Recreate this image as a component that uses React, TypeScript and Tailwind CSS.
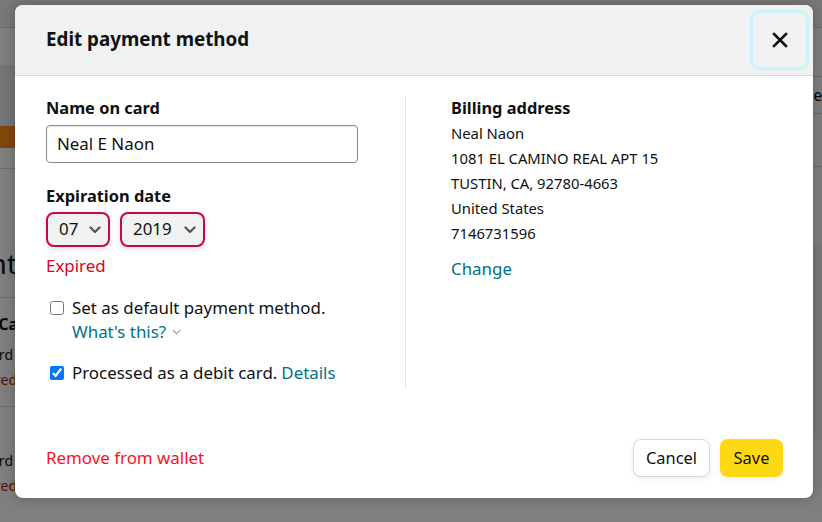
import React from "react";

function Chevron({ className }: { className?: string }) {
  return (
    <svg viewBox="0 0 12 8" className={className} fill="none">
      <path d="M1.5 1.5 L6 6 L10.5 1.5" stroke="currentColor" strokeWidth="2.2" strokeLinecap="round" strokeLinejoin="round" />
    </svg>
  );
}

function SelectBox({ value, width }: { value: string; width: string }) {
  return (
    <div
      className={`flex h-[35px] ${width} items-center justify-between rounded-[8px] border-2 border-[#c40c3c] bg-[#f0f2f2] pl-[11px] pr-[7px] shadow-[0_2px_5px_rgba(15,17,17,0.15)]`}
    >
      <span className="text-[16.9px] leading-none text-[#0f1111]">{value}</span>
      <Chevron className="h-[8px] w-[12px] text-[#555]" />
    </div>
  );
}

export default function App() {
  return (
    <div
      className="relative h-[522px] w-full overflow-hidden bg-white"
      style={{ fontFamily: '"Noto Sans", "Open Sans", Arial, sans-serif' }}
    >
      {/* underlying page */}
      <div className="flex h-full flex-col text-[#0f1111]">
        <div className="h-[28px] shrink-0 border-b border-[#d5d9d9] bg-[#f3f3f3]" />
        <div className="flex flex-1">
          <div className="flex w-[185px] shrink-0 flex-col">
            <div className="h-[37px]" />
            <div className="ml-[-70px] flex h-[83px] w-[110px] flex-col overflow-hidden rounded-[4px] bg-[#e9ecef]">
              <div className="flex flex-1 flex-col items-end justify-center pr-[92px]">
                <span className="text-[10px] font-bold italic text-[#23313f]">amazon</span>
                <span className="mt-[8px] text-[10px] font-bold italic text-[#1a1f71]">VISA</span>
              </div>
              <div className="h-[22px] bg-[#ff8f1c]" />
            </div>
            <div className="mt-[20px] border-b border-[#d5d9d9]" />
            <div className="mt-[80px] flex justify-end pr-[168px] text-[28px] leading-none whitespace-nowrap">Payment</div>
            <div className="mt-[20px] border-b border-[#d5d9d9]" />
            <div className="mt-[14px] flex justify-end pr-[150px] text-[16px] font-bold whitespace-nowrap">Card</div>
            <div className="mt-[8px] flex justify-end pr-[172px] text-[14px] whitespace-nowrap">Card</div>
            <div className="mt-[4px] flex justify-end pr-[168px] text-[14px] whitespace-nowrap text-[#b12704]">Expired</div>
            <div className="mt-[16px] border-b border-[#d5d9d9]" />
            <div className="mt-[43px] flex justify-end pr-[172px] text-[14px] whitespace-nowrap">Card</div>
            <div className="mt-[4px] flex justify-end pr-[168px] text-[14px] whitespace-nowrap text-[#b12704]">Expired</div>
          </div>
          <div className="flex flex-1 flex-col">
            <div className="h-[49px] border-b border-[#d5d9d9]" />
            <div className="flex h-[37px] justify-end border-b border-[#d5d9d9] text-[16px] leading-[37px]">
              <span className="mr-[-19px]">Read</span>
            </div>
            <div className="h-[53px] border-b border-[#d5d9d9]" />
            <div className="h-[77px]" />
            <div className="h-[195px] bg-[#f5f5f5]" />
          </div>
        </div>
      </div>

      {/* overlay */}
      <div className="absolute inset-0 bg-[rgba(0,0,0,0.5)] pl-[15px] pt-[5px]">
        <div className="flex h-[493px] w-[798px] flex-col overflow-hidden rounded-[8px] bg-white text-[#0f1111] shadow-[0_0_14px_rgba(0,0,0,0.25)]">
          {/* header */}
          <div className="flex h-[71px] shrink-0 items-center justify-between border-b border-[#d5d9d9] bg-[#f0f2f2] pl-[31px] pr-[4px]">
            <h2 className="mt-[-2px] text-[18.8px] font-bold leading-none">Edit payment method</h2>
            <button className="flex h-[60px] w-[59px] items-center justify-center rounded-[9px] border-[3px] border-[#c8f3fa]">
              <svg viewBox="0 0 16 16" className="h-[16px] w-[16px]">
                <path d="M2 2 L14 14 M14 2 L2 14" stroke="#0f1111" strokeWidth="2.6" strokeLinecap="square" />
              </svg>
            </button>
          </div>

          {/* body */}
          <div className="flex px-[31px] pt-[20px]">
            <div className="flex w-[312px] flex-col">
              <div className="text-[16.4px] font-bold leading-[24px]">Name on card</div>
              <div className="mt-[5px] flex h-[38px] items-center rounded-[4px] border border-[#888c8c] px-[10px] text-[16.9px] shadow-[inset_0_1px_2px_rgba(15,17,17,0.1)]">
                Neal E Naon
              </div>
              <div className="mt-[21px] text-[16.4px] font-bold leading-[24px]">Expiration date</div>
              <div className="mt-[4px] flex gap-[10px]">
                <SelectBox value="07" width="w-[64px]" />
                <SelectBox value="2019" width="w-[85px]" />
              </div>
              <div className="mt-[7px] text-[16.9px] leading-[24px] text-[#e0001b]">Expired</div>
              <div className="mt-[18px] flex items-center text-[16.9px] leading-[24px]">
                <input type="checkbox" className="ml-[4px] h-[14px] w-[14px]" readOnly />
                <span className="ml-[8px]">Set as default payment method.</span>
              </div>
              <div className="ml-[26px] flex items-center text-[16.9px] leading-[24px] text-[#007185]">
                <span>What's this?</span>
                <svg viewBox="0 0 10 6" className="ml-[6px] h-[6px] w-[9px]" fill="none">
                  <path d="M1 1 L5 5 L9 1" stroke="#8d9096" strokeWidth="1.2" />
                </svg>
              </div>
              <div className="mt-[17px] flex items-center text-[16.9px] leading-[24px]">
                <input type="checkbox" defaultChecked className="ml-[4px] h-[14px] w-[14px]" />
                <span className="ml-[8px] whitespace-nowrap">Processed as a debit card.</span>
                <span className="ml-[4px] text-[#007185]">Details</span>
              </div>
            </div>
            <div className="ml-[47px] h-[293px] w-px bg-[#e7e7e7]" />
            <div className="ml-[45px] flex flex-col">
              <div className="text-[16.4px] font-bold leading-[24px]">Billing address</div>
              <div className="mt-[1px] text-[14.8px] leading-[25px]">
                <div>Neal Naon</div>
                <div>1081 EL CAMINO REAL APT 15</div>
                <div>TUSTIN, CA, 92780-4663</div>
                <div>United States</div>
                <div>7146731596</div>
              </div>
              <div className="mt-[11px] text-[16.9px] leading-[24px] text-[#007185]">Change</div>
            </div>
          </div>

          {/* footer */}
          <div className="mt-auto flex items-center justify-between pb-[21px] pl-[31px] pr-[30px]">
            <span className="text-[16.9px] leading-[24px] text-[#f5141e]">Remove from wallet</span>
            <div className="flex gap-[10px]">
              <button className="h-[38px] w-[77px] rounded-[8px] border border-[#d5d9d9] bg-white text-[16.4px] shadow-[0_2px_5px_rgba(213,217,217,0.5)]">
                Cancel
              </button>
              <button className="h-[38px] w-[63px] rounded-[8px] bg-[#ffd814] text-[16.4px] shadow-[0_2px_5px_rgba(213,217,217,0.5)]">
                Save
              </button>
            </div>
          </div>
        </div>
      </div>
    </div>
  );
}
